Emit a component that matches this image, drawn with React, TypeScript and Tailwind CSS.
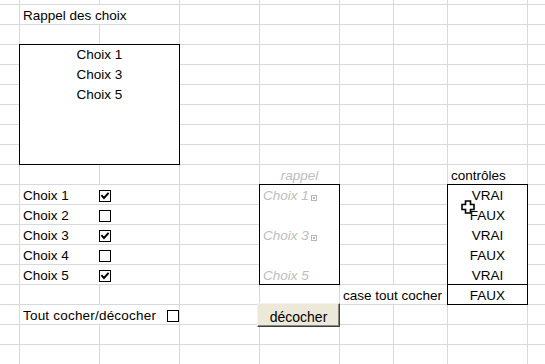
const COL = ["col-start-1", "col-start-2", "col-start-3", "col-start-4", "col-start-5", "col-start-6", "col-start-7", "col-start-8", "col-start-9"];
const ROW = [
    "row-start-1", "row-start-2", "row-start-3", "row-start-4", "row-start-5", "row-start-6", "row-start-7",
    "row-start-8", "row-start-9", "row-start-10", "row-start-11", "row-start-12", "row-start-13", "row-start-14",
    "row-start-15", "row-start-16", "row-start-17", "row-start-18", "row-start-19",
];

const choices = [
    { label: "Choix 1", checked: true, rowCls: "row-start-11" },
    { label: "Choix 2", checked: false, rowCls: "row-start-12" },
    { label: "Choix 3", checked: true, rowCls: "row-start-13" },
    { label: "Choix 4", checked: false, rowCls: "row-start-14" },
    { label: "Choix 5", checked: true, rowCls: "row-start-15" },
];

/* Excel form-control checkbox */
function CheckBox({ checked }: { checked: boolean }) {
    return (
        <span className="block w-[12px] h-[12px] border border-black bg-white shrink-0">
            {checked && (
                <svg width="10" height="10" viewBox="0 0 10 10" className="block">
                    <path d="M2 4.8 L4 7 L8 2.6" fill="none" stroke="#000" strokeWidth="1.9" strokeLinecap="square" />
                </svg>
            )}
        </span>
    );
}

/* the white plus-shaped cell cursor */
function CellCursor() {
    return (
        <svg width="14" height="14" viewBox="0 0 14 14" className="absolute left-[461px] top-[200px]">
            <path
                d="M4.5 1 H9.5 V4.5 H13 V9.5 H9.5 V13 H4.5 V9.5 H1 V4.5 H4.5 Z"
                fill="#fff"
                stroke="#000"
                strokeWidth="1.6"
                strokeLinejoin="miter"
            />
        </svg>
    );
}

export default function App() {
    const cell = "flex items-end leading-4 whitespace-nowrap";
    return (
        <div className="relative w-[545px] h-[364px] overflow-hidden bg-white text-[13.5px] text-black font-['Liberation_Sans',Arial,sans-serif]">
            <div className="grid h-full w-full gap-px bg-[#d6d9e0] grid-cols-[19px_79px_79px_79px_79px_53px_53px_79px_1fr] grid-rows-[4px_repeat(18,19px)]">
                {/* empty sheet cells */}
                {ROW.map((r) =>
                    COL.map((c) => <div key={r + c} className={`${c} ${r} bg-white`} />)
                )}

                {/* Row 1 — title */}
                <div className={`col-start-2 col-span-2 row-start-2 bg-white pl-[3px] ${cell}`}>Rappel des choix</div>

                {/* Summary box */}
                <div className="col-start-2 col-span-2 row-start-4 row-span-6 bg-white outline outline-black flex flex-col items-center leading-5">
                    <span>Choix 1</span>
                    <span>Choix 3</span>
                    <span>Choix 5</span>
                </div>

                {/* headers */}
                <div className={`col-start-5 row-start-10 bg-white justify-center italic text-[#bdbdbd] ${cell}`}>rappel</div>
                <div className={`col-start-8 row-start-10 bg-white pl-[3px] ${cell}`}>contrôles</div>

                {/* Choices with their checkboxes */}
                {choices.map((ch) => (
                    <div key={ch.label} className="contents">
                        <div className={`col-start-2 ${ch.rowCls} bg-white pl-[3px] ${cell}`}>{ch.label}</div>
                        <div className={`col-start-3 ${ch.rowCls} bg-white -ml-px pt-[5px]`}>
                            <CheckBox checked={ch.checked} />
                        </div>
                    </div>
                ))}

                {/* rappel list */}
                <div className="col-start-5 row-start-11 row-span-5 bg-white outline outline-black flex flex-col gap-px italic text-[#bdbdbd]">
                    {["Choix 1", "", "Choix 3", "", "Choix 5"].map((t, i) => (
                        <div key={i} className={`h-[19px] pl-[3px] ${cell}`}>
                            {t}
                            {i < 4 && t && (
                                <span className="ml-[2px] mb-[3px] w-[6px] h-[6px] border border-[#b5b5b5] flex items-center justify-center">
                                    <span className="block w-[2px] h-[2px] bg-[#b5b5b5]" />
                                </span>
                            )}
                        </div>
                    ))}
                </div>

                {/* controls column */}
                <div className="col-start-8 row-start-11 row-span-5 bg-white outline outline-black flex flex-col gap-px">
                    {["VRAI", "FAUX", "VRAI", "FAUX", "VRAI"].map((v, i) => (
                        <div key={i} className={`h-[19px] justify-center ${cell}`}>{v}</div>
                    ))}
                </div>

                <div className={`col-start-6 col-span-2 row-start-16 bg-white justify-end pr-[5px] ${cell}`}>case tout cocher</div>
                <div className={`col-start-8 row-start-16 bg-white outline outline-black justify-center ${cell}`}>FAUX</div>

                {/* select all */}
                <div className={`col-start-2 col-span-2 row-start-17 bg-white pl-[3px] ${cell}`}>
                    <span className="tracking-[0.2px]">Tout cocher/décocher</span>
                    <span className="ml-auto self-start mt-[5px]">
                        <CheckBox checked={false} />
                    </span>
                </div>

                <div className="col-start-5 row-start-17 relative">
                    <button
                        type="button"
                        className="absolute left-[-3px] top-[-2px] w-[83px] h-[24px] flex items-center justify-center pt-[4px] bg-[#ece9d8] border border-t-[#f4f3ee] border-l-[#f4f3ee] border-r-[#404040] border-b-[#404040] shadow-[inset_-1px_-1px_0_#8a887e] text-[14px] leading-4 text-black"
                    >
                        décocher
                    </button>
                </div>
            </div>

            <CellCursor />
        </div>
    );
}
